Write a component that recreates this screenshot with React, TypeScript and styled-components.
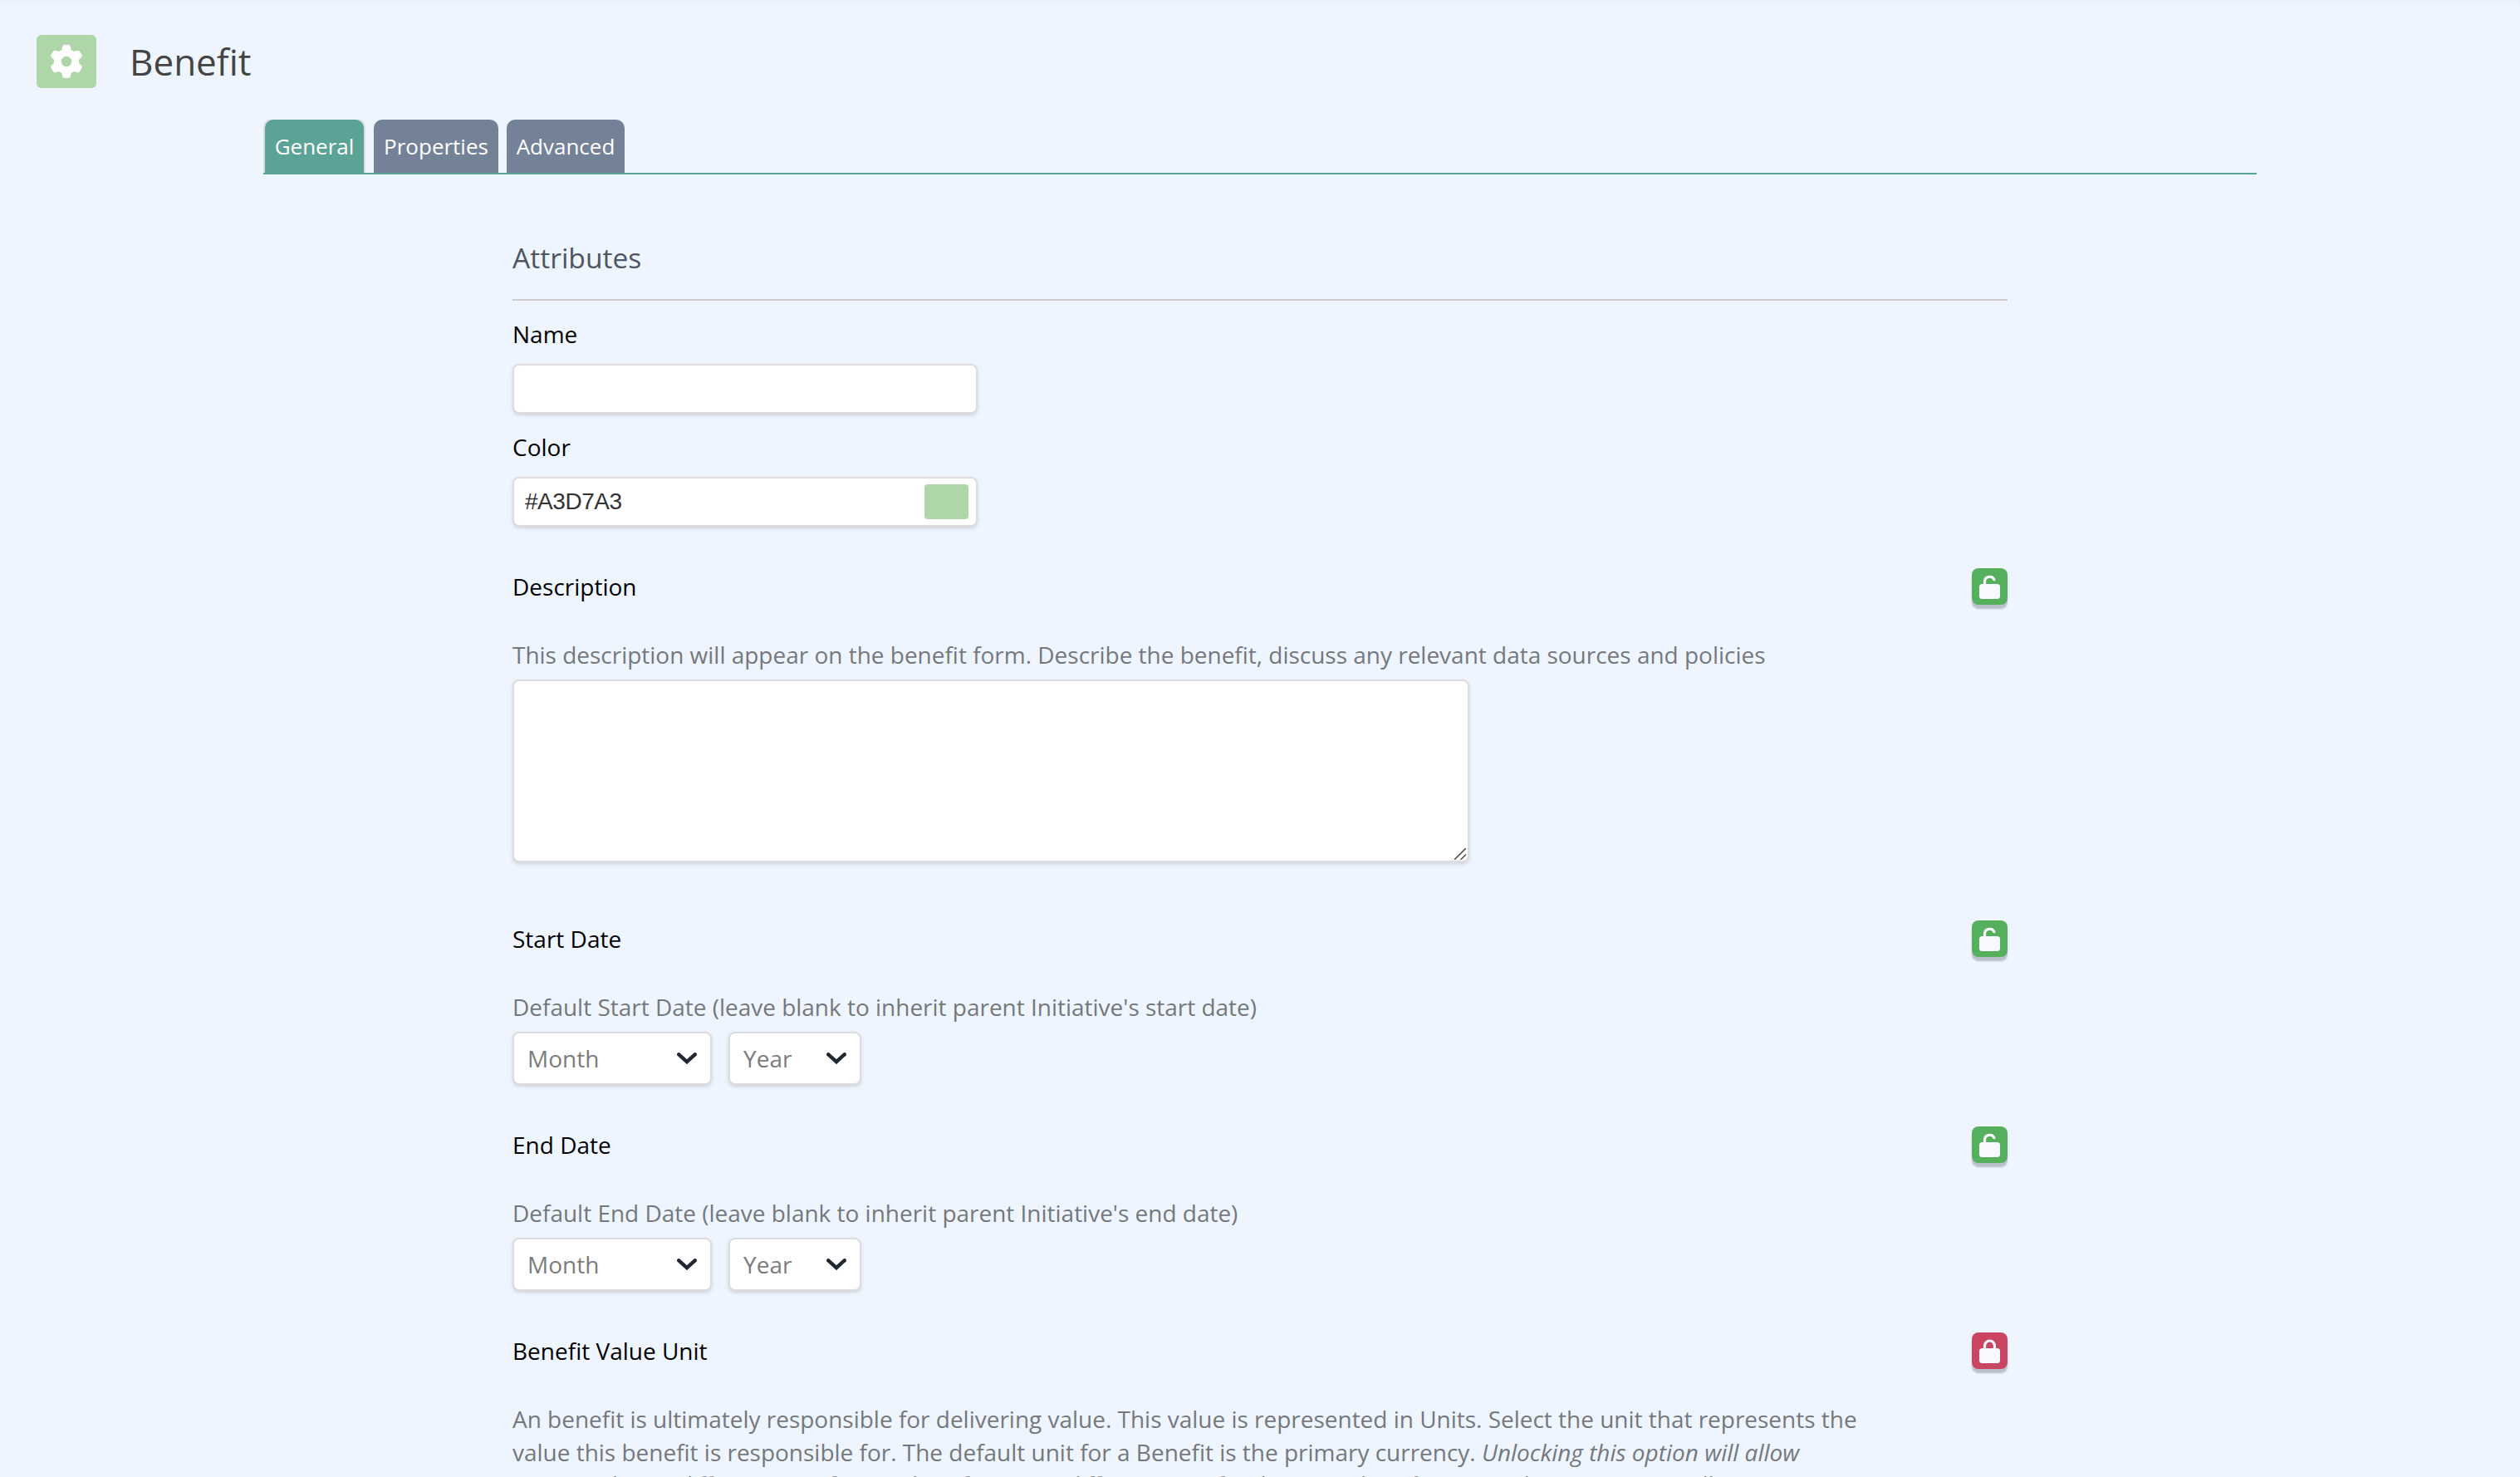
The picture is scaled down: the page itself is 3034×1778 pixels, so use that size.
import React from "react";
import { FaGear } from "react-icons/fa6";
import styled, { createGlobalStyle } from "styled-components";

type DateFieldProps = {
  label: string;
  help: string;
};

const GlobalStyle = createGlobalStyle`
  * {
    box-sizing: border-box;
  }

  body {
    margin: 0;
    background: #eef5ff;
    font-family: "Open Sans", sans-serif;
    font-size: 28px;
    font-variant-ligatures: none;
    color: #75787c;
  }
`;

const Page = styled.div`
  height: 1778px;
  overflow: hidden;
  box-shadow: inset 0 6px 6px -4px rgba(0, 0, 0, 0.04);
`;

const PageHeader = styled.header`
  display: flex;
  align-items: center;
  gap: 40px;
  height: 64px;
  margin: 42px 0 38px 44px;
`;

const HeaderIcon = styled.div`
  display: flex;
  align-items: center;
  justify-content: center;
  width: 72px;
  height: 64px;
  border-radius: 6px;
  background: #aed6a8;
  color: #fff;
  font-size: 40px;
`;

const Title = styled.h1`
  margin: 0;
  font-size: 44px;
  font-weight: 400;
  line-height: 64px;
  color: #444;
`;

const Tabs = styled.nav`
  display: flex;
  width: 2400px;
  height: 66px;
  margin-left: 317px;
  padding-left: 2px;
  border-bottom: 2px solid #5ba397;
`;

const Tab = styled.a<{ $active?: boolean; $width: number }>`
  width: ${({ $width }) => $width}px;
  height: 64px;
  margin-right: ${({ $active }) => ($active ? 12 : 10)}px;
  border-radius: 10px 10px 0 0;
  background: ${({ $active }) => ($active ? "#5ba397" : "#748298")};
  box-shadow: ${({ $active }) => ($active ? "0 0 0 2px #ddd" : "none")};
  clip-path: inset(0 -2px 0 -2px);
  color: #fff;
  font-size: 26px;
  line-height: 65px;
  text-align: center;
`;

const Form = styled.main`
  width: 1800px;
  margin-left: 617px;
`;

const SectionTitle = styled.h2`
  height: 152px;
  margin: 0 0 20px;
  padding-top: 76px;
  border-bottom: 2px solid #ccc;
  font-size: 33.6px;
  font-weight: 400;
  line-height: 48px;
  color: #4e5661;
`;

const Label = styled.label`
  display: block;
  height: 40px;
  line-height: 40px;
  color: #000;
`;

const Fields = styled.div`
  margin-bottom: 30px;
`;

const Field = styled.div`
  height: 136px;
`;

const InputBox = styled.div`
  display: flex;
  align-items: center;
  justify-content: space-between;
  width: 560px;
  height: 60px;
  margin-top: 16px;
  padding: 0 9px 0 13px;
  border: 2px solid #ddd;
  border-radius: 8px;
  background: #fff;
  box-shadow: 0 2px 4px rgba(0, 0, 0, 0.14);
  color: #333;
  font-family: "Liberation Sans", Arial, sans-serif;
  letter-spacing: -0.45px;
`;

const Swatch = styled.span`
  width: 53px;
  height: 42px;
  border-radius: 4px;
  background: #aed6a8;
`;

const Block = styled.section<{ $height: number }>`
  height: ${({ $height }) => $height}px;
`;

const BlockHeader = styled.div`
  display: flex;
  align-items: center;
  justify-content: space-between;
  height: 44px;
  margin-bottom: 40px;
`;

const LockButton = styled.button<{ $locked?: boolean }>`
  display: flex;
  width: 43px;
  height: 44px;
  padding: 8px 0 0 9px;
  border: 0;
  border-radius: 8px;
  background: ${({ $locked }) => ($locked ? "#c94561" : "#55b05d")};
  box-shadow: 0 5px 2px rgba(0, 0, 0, 0.22);
`;

const Help = styled.p`
  margin: 0;
  line-height: 40px;
  letter-spacing: -0.015px;
  white-space: nowrap;
`;

const Note = styled(Help)`
  margin-top: -1px;
  font-style: italic;
`;

const TextArea = styled.div`
  display: flex;
  align-items: flex-end;
  justify-content: flex-end;
  width: 1152px;
  height: 220px;
  margin-top: 10px;
  padding: 0 2px 1px 0;
  border: 2px solid #ddd;
  border-radius: 8px;
  background: #fff;
  box-shadow: 0 2px 4px rgba(0, 0, 0, 0.14);
`;

const Selects = styled.div`
  display: flex;
  gap: 20px;
  margin-top: 10px;
`;

const Select = styled.div<{ $width: number }>`
  display: flex;
  align-items: center;
  justify-content: space-between;
  width: ${({ $width }) => $width}px;
  height: 64px;
  padding: 0 16px;
  border: 2px solid #ddd;
  border-radius: 8px;
  background: #fff;
  box-shadow: 0 2px 4px rgba(0, 0, 0, 0.14);
  color: #7c7c7c;
`;

const Lock: React.FC<{ locked?: boolean }> = ({ locked }) => (
  <LockButton $locked={locked}>
    <svg width="25" height="29" viewBox="0 0 25 29" fill="none">
      <rect y="11" width="25" height="18" rx="3.5" fill="#f8faff" />
      <path
        d={
          locked ? "M6.5 12V8a6 6 0 0 1 12 0v4" : "M6.5 12V8a6 6 0 0 1 11.4-2.3"
        }
        stroke="#f8faff"
        strokeWidth="3.2"
        strokeLinecap="round"
      />
    </svg>
  </LockButton>
);

const Chevron = () => (
  <svg width="24" height="14" viewBox="0 0 24 14" fill="none">
    <path
      d="M2.3 2.3L12 11.2L21.7 2.3"
      stroke="#212832"
      strokeWidth="4.4"
      strokeLinecap="round"
    />
  </svg>
);

const DateField: React.FC<DateFieldProps> = ({ label, help }) => (
  <Block $height={248}>
    <BlockHeader>
      <Label>{label}</Label>
      <Lock />
    </BlockHeader>
    <Help>{help}</Help>
    <Selects>
      <Select $width={240}>
        Month
        <Chevron />
      </Select>
      <Select $width={160}>
        Year
        <Chevron />
      </Select>
    </Selects>
  </Block>
);

const App: React.FC = () => (
  <Page>
    <GlobalStyle />
    <PageHeader>
      <HeaderIcon>
        <FaGear />
      </HeaderIcon>
      <Title>Benefit</Title>
    </PageHeader>
    <Tabs>
      <Tab $active $width={119}>
        General
      </Tab>
      <Tab $width={150}>Properties</Tab>
      <Tab $width={142}>Advanced</Tab>
    </Tabs>
    <Form>
      <SectionTitle>Attributes</SectionTitle>
      <Fields>
        <Field>
          <Label>Name</Label>
          <InputBox />
        </Field>
        <Field>
          <Label>Color</Label>
          <InputBox>
            #A3D7A3
            <Swatch />
          </InputBox>
        </Field>
      </Fields>
      <Block $height={424}>
        <BlockHeader>
          <Label>Description</Label>
          <Lock />
        </BlockHeader>
        <Help>
          This description will appear on the benefit form. Describe the
          benefit, discuss any relevant data sources and policies
        </Help>
        <TextArea>
          <svg width="14" height="14" viewBox="0 0 14 14">
            <path d="M0 14L14 0M7.5 14L14 7.5" stroke="#555" strokeWidth="1.6" />
          </svg>
        </TextArea>
      </Block>
      <DateField
        label="Start Date"
        help="Default Start Date (leave blank to inherit parent Initiative's start date)"
      />
      <DateField
        label="End Date"
        help="Default End Date (leave blank to inherit parent Initiative's end date)"
      />
      <Block $height={240}>
        <BlockHeader>
          <Label>Benefit Value Unit</Label>
          <Lock locked />
        </BlockHeader>
        <Help>
          An benefit is ultimately responsible for delivering value. This value
          is represented in Units. Select the unit that represents the
          <br />
          value this benefit is responsible for. The default unit for a Benefit
          is the primary currency. <em>Unlocking this option will allow</em>
        </Help>
        <Note>
          users to choose different units for new benefits. Using different
          units for these new benefits can make your money roll up
        </Note>
      </Block>
    </Form>
  </Page>
);

export default App;
